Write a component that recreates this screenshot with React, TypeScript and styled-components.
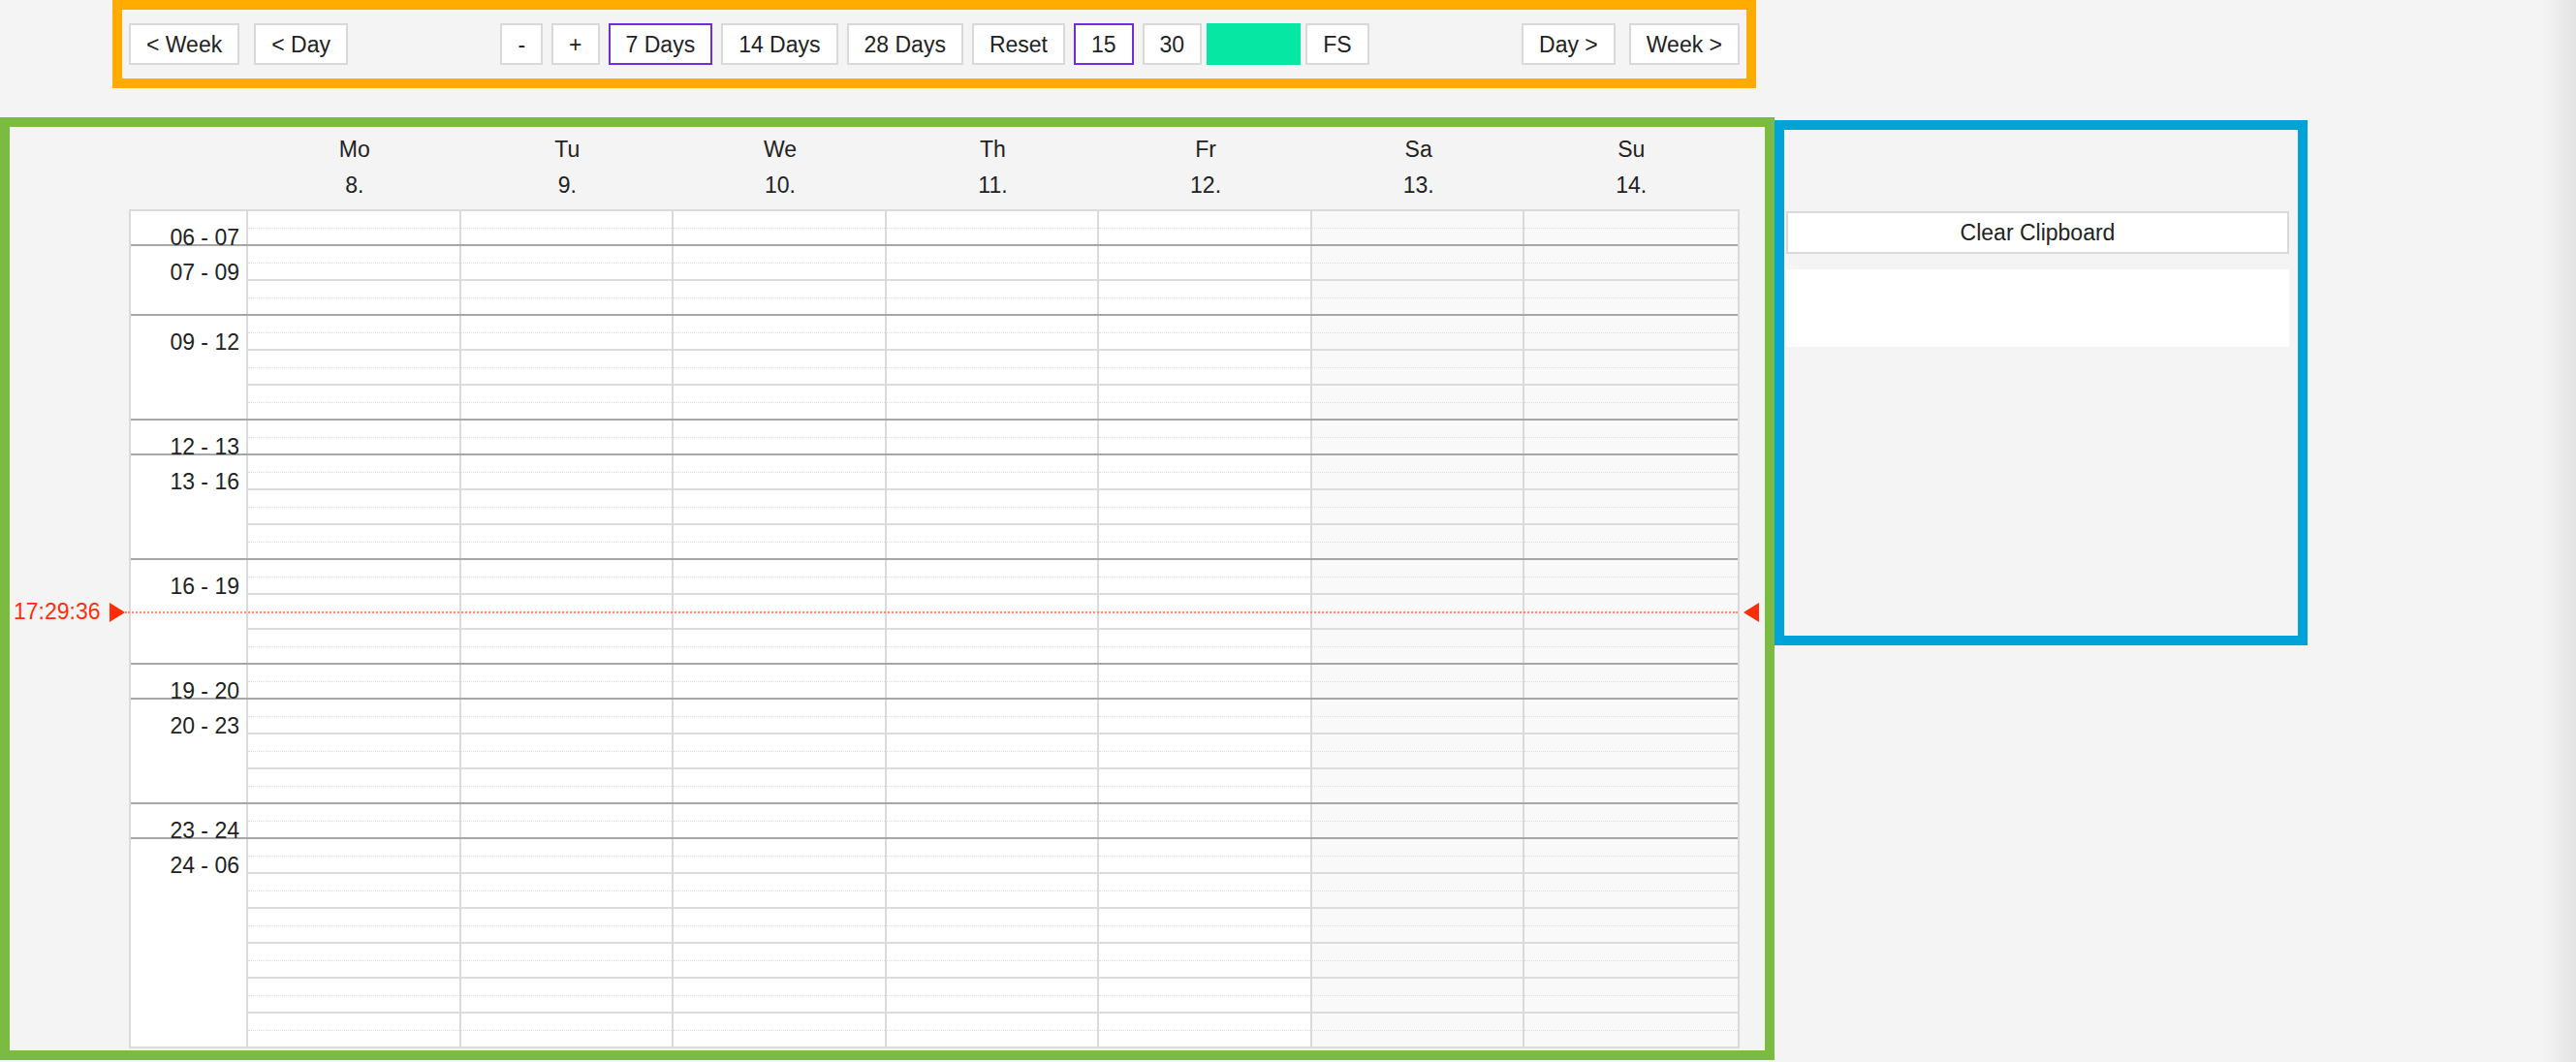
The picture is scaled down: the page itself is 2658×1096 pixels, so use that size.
import React from 'react';
import styled, { createGlobalStyle } from 'styled-components';

const GlobalStyle = createGlobalStyle`
  html, body {
    margin: 0;
    padding: 0;
  }
  body {
    min-height: 100vh;
    overflow: hidden;
    background: linear-gradient(to right, #f4f4f4 calc(100% - 34px), #e3e3e3);
    font-family: "Liberation Sans", Arial, sans-serif;
    color: #222;
  }
`;

const SLOT = 36;

const Toolbar = styled.div`
  box-sizing: border-box;
  width: 1696px;
  height: 91px;
  margin-left: 116px;
  padding: 14px 7px;
  border: 10px solid #ffab00;
  background: #f4f4f4;
  display: flex;
  align-items: center;
  justify-content: space-between;
`;

const ButtonGroup = styled.div<{ $gap: number }>`
  display: flex;
  align-items: center;
  gap: ${({ $gap }) => $gap}px;
`;

const ToolButton = styled.button<{ $active?: boolean }>`
  box-sizing: border-box;
  height: 43px;
  padding: 0 16px;
  background: #fff;
  border: 2px solid ${({ $active }) => ($active ? '#6e2fdb' : '#d9d9d9')};
  border-radius: 0;
  font-family: "Liberation Sans", Arial, sans-serif;
  font-size: 23px;
  line-height: 26px;
  color: #222;
  cursor: pointer;
`;

const ColorSwatch = styled.div`
  width: 97px;
  height: 43px;
  margin: 0 -4px;
  background: #06e7a3;
`;

const Main = styled.div`
  display: flex;
  align-items: flex-start;
  margin-top: 30px;
`;

const CalendarPanel = styled.div`
  box-sizing: border-box;
  width: 1831px;
  position: relative;
  padding: 5px 26px 2px 123px;
  border: 10px solid #7bbb41;
  background: #f4f4f4;
`;

const DayHeader = styled.div`
  display: grid;
  grid-template-columns: 121px repeat(7, 1fr);
  padding: 0 2px;
  margin-bottom: 6px;
`;

const DayHead = styled.div`
  text-align: center;
  font-size: 23px;
  line-height: 37px;
  color: #222;
`;

const Table = styled.div`
  border: 2px solid #dadada;
  background: #fff;
`;

const Block = styled.div<{ $slots: number; $last?: boolean }>`
  display: grid;
  grid-template-columns: 121px repeat(7, 1fr);
  grid-template-rows: ${({ $slots }) => $slots * SLOT - 2}px;
  border-bottom: ${({ $last }) => ($last ? 'none' : '2px solid #a6a6a6')};
`;

const TimeCell = styled.div`
  box-sizing: border-box;
  min-height: 0;
  padding: 14px 7px 0 0;
  border-right: 2px solid #dadada;
  text-align: right;
  font-size: 23px;
  line-height: 26px;
  white-space: nowrap;
  color: #222;
`;

const DayCell = styled.div<{ $weekend?: boolean }>`
  display: flex;
  flex-direction: column;
  min-height: 0;
  background: ${({ $weekend }) => ($weekend ? '#f9f9f9' : '#fff')};
  border-right: 2px solid #dadada;

  &:last-child {
    border-right: none;
  }
`;

const Slot = styled.div<{ $last?: boolean }>`
  box-sizing: border-box;
  height: ${({ $last }) => ($last ? SLOT - 2 : SLOT)}px;
  display: flex;
  flex-direction: column;
  border-bottom: ${({ $last }) => ($last ? 'none' : '2px solid #dcdcdc')};
`;

const HalfHour = styled.div`
  box-sizing: border-box;
  flex: 1;

  &:first-child {
    border-bottom: 1px dotted #dedede;
  }
`;

const NowMarker = styled.div`
  position: absolute;
  left: 0;
  right: 0;
  height: 20px;
  display: flex;
  align-items: center;
  pointer-events: none;
`;

const NowLabel = styled.span`
  box-sizing: border-box;
  width: 103px;
  padding-left: 4px;
  font-size: 23px;
  color: #ff2d0a;
  white-space: nowrap;
`;

const NowLine = styled.div`
  flex: 1;
  border-top: 2px dotted #ff8a68;
  margin-right: 6px;
`;

const Arrow = styled.svg`
  flex: none;
  display: block;
`;

const ClipboardPanel = styled.div`
  box-sizing: border-box;
  width: 550px;
  height: 542px;
  margin-top: 3px;
  padding: 84px 9px 0 2px;
  border: 10px solid #00a3d8;
  background: #f4f4f4;
  display: flex;
  flex-direction: column;
  gap: 16px;
`;

const ClearButton = styled(ToolButton)`
  width: 100%;
  height: 44px;
`;

const ClipboardArea = styled.div`
  height: 80px;
  background: #fff;
`;

const days = [
  { name: 'Mo', date: '8.' },
  { name: 'Tu', date: '9.' },
  { name: 'We', date: '10.' },
  { name: 'Th', date: '11.' },
  { name: 'Fr', date: '12.' },
  { name: 'Sa', date: '13.', weekend: true },
  { name: 'Su', date: '14.', weekend: true },
];

const blocks = [
  { label: '06 - 07', slots: 1 },
  { label: '07 - 09', slots: 2 },
  { label: '09 - 12', slots: 3 },
  { label: '12 - 13', slots: 1 },
  { label: '13 - 16', slots: 3 },
  { label: '16 - 19', slots: 3 },
  { label: '19 - 20', slots: 1 },
  { label: '20 - 23', slots: 3 },
  { label: '23 - 24', slots: 1 },
  { label: '24 - 06', slots: 6 },
];

const NOW = '17:29:36';

// header (5 + 2*37) + gap 6 + table border 2
const GRID_TOP = 87;

const nowOffset = () => {
  const [h, m, s] = NOW.split(':').map(Number);
  const hours = h - 6 + m / 60 + s / 3600;
  return GRID_TOP + hours * SLOT - 10;
};

const App: React.FC = () => {
  return (
    <>
      <GlobalStyle />
      <Toolbar>
        <ButtonGroup $gap={15}>
          <ToolButton>&lt; Week</ToolButton>
          <ToolButton>&lt; Day</ToolButton>
        </ButtonGroup>
        <ButtonGroup $gap={9}>
          <ToolButton>-</ToolButton>
          <ToolButton>+</ToolButton>
          <ToolButton $active>7 Days</ToolButton>
          <ToolButton>14 Days</ToolButton>
          <ToolButton>28 Days</ToolButton>
          <ToolButton>Reset</ToolButton>
          <ToolButton $active>15</ToolButton>
          <ToolButton>30</ToolButton>
          <ColorSwatch />
          <ToolButton>FS</ToolButton>
        </ButtonGroup>
        <ButtonGroup $gap={14}>
          <ToolButton>Day &gt;</ToolButton>
          <ToolButton>Week &gt;</ToolButton>
        </ButtonGroup>
      </Toolbar>

      <Main>
        <CalendarPanel>
          <DayHeader>
            <div />
            {days.map((d) => (
              <DayHead key={d.name}>
                <div>{d.name}</div>
                <div>{d.date}</div>
              </DayHead>
            ))}
          </DayHeader>

          <Table>
            {blocks.map((b, bi) => (
              <Block key={b.label} $slots={b.slots} $last={bi === blocks.length - 1}>
                <TimeCell>{b.label}</TimeCell>
                {days.map((d) => (
                  <DayCell key={d.name} $weekend={d.weekend}>
                    {Array.from({ length: b.slots }).map((_, si) => (
                      <Slot key={si} $last={si === b.slots - 1}>
                        <HalfHour />
                        <HalfHour />
                      </Slot>
                    ))}
                  </DayCell>
                ))}
              </Block>
            ))}
          </Table>

          <NowMarker style={{ top: nowOffset() }}>
            <NowLabel>{NOW}</NowLabel>
            <Arrow width="16" height="20" viewBox="0 0 16 20">
              <polygon points="0,0 16,10 0,20" fill="#ff2d0a" />
            </Arrow>
            <NowLine />
            <Arrow width="16" height="20" viewBox="0 0 16 20" style={{ marginRight: 6 }}>
              <polygon points="16,0 0,10 16,20" fill="#ff2d0a" />
            </Arrow>
          </NowMarker>
        </CalendarPanel>

        <ClipboardPanel>
          <ClearButton>Clear Clipboard</ClearButton>
          <ClipboardArea />
        </ClipboardPanel>
      </Main>
    </>
  );
};

export default App;
